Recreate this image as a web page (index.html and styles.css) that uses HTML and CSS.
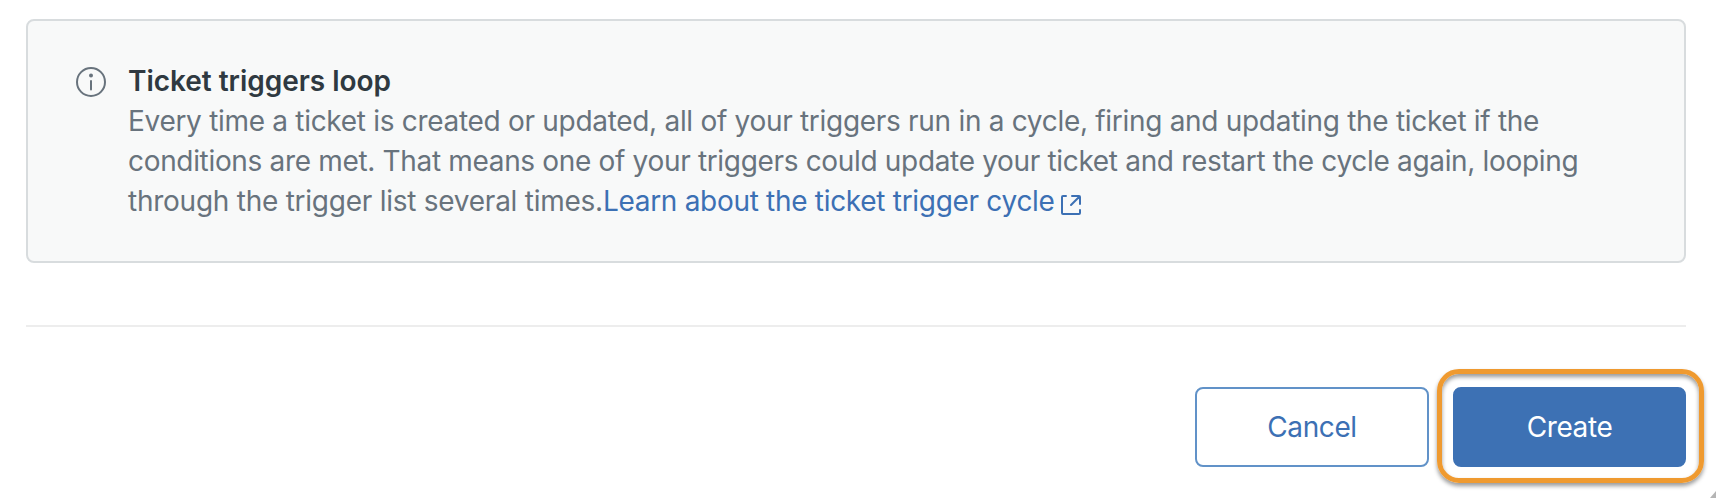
FILE: index.html
```html
<!DOCTYPE html>
<html lang="en">
<head>
    <meta charset="UTF-8">
    <meta name="viewport" content="width=device-width, initial-scale=1.0">
    <title>Create trigger</title>
    <link rel="stylesheet" href="styles.css">
</head>
<body>
    <div class="container">
        <div class="well">
            <svg class="info-icon" viewBox="0 0 16 16" aria-hidden="true">
                <circle cx="8" cy="8" r="7" fill="none" stroke="currentColor"/>
                <path stroke="currentColor" stroke-linecap="round" d="M8 7.5v4.3"/>
                <circle cx="8" cy="4.7" r="1" fill="currentColor"/>
            </svg>
            <div class="well-content">
                <h2 class="title">Ticket triggers loop</h2>
                <p class="text">
                    <span class="line">Every time a ticket is created or updated, all of your triggers run in a cycle, firing and updating the ticket if the</span>
                    <span class="line line-tight">conditions are met. That means one of your triggers could update your ticket and restart the cycle again, looping</span>
                    <span class="line"><span class="line-loose">through the trigger list several times.</span><a class="link" href="#">Learn about the ticket trigger cycle<svg class="link-icon" viewBox="0 0 12 12" aria-hidden="true"><path fill="none" stroke="currentColor" stroke-linecap="round" d="M10.5 8.5V10c0 .3-.2.5-.5.5H2c-.3 0-.5-.2-.5-.5V2c0-.3.2-.5.5-.5h1.5M6 6l4-4m-3.5-.5H10c.3 0 .5.2.5.5v3.5"/></svg></a></span>
                </p>
            </div>
        </div>

        <hr class="divider">

        <div class="btn-group">
            <button type="button" class="btn">Cancel</button>
            <div class="highlight">
                <button type="submit" class="btn btn-primary">Create</button>
            </div>
        </div>
    </div>
    <div class="corner"></div>
</body>
</html>
```

FILE: styles.css
```css
* {
    box-sizing: border-box;
}

body {
    margin: 0;
    height: 498px;
    position: relative;
    overflow: hidden;
    background: #fff;
    font-family: Inter, "Liberation Sans", sans-serif;
    font-size: 28px;
    line-height: 40px;
}

.container {
    padding: 19px 30px 0 26px;
}

.well {
    display: flex;
    gap: 20px;
    padding: 40px 48px;
    border: 2px solid #d8dcde;
    border-radius: 8px;
    background: #f8f9f9;
    color: #68737d;
}

.info-icon {
    flex: none;
    width: 32px;
    height: 32px;
    margin-top: 5px;
    margin-left: -1px;
    margin-right: 1px;
}

.title {
    margin: 0;
    font-size: 28px;
    font-weight: 600;
    line-height: 40px;
    letter-spacing: -0.03px;
    color: #2f3941;
}

.text {
    margin: 0;
    letter-spacing: -0.3px;
}

.line {
    display: block;
    white-space: nowrap;
}

.line-tight {
    letter-spacing: -0.33px;
}

.line-loose {
    letter-spacing: -0.25px;
}

.link {
    color: #3c70b4;
    text-decoration: none;
}

.link-icon {
    width: 24px;
    height: 24px;
    margin-left: 4px;
    vertical-align: -6px;
}

.divider {
    height: 2px;
    margin: 62px 0 0;
    border: none;
    background: #ededed;
}

.btn-group {
    display: flex;
    justify-content: flex-end;
    margin-top: 42px;
    margin-right: -18px;
}

.btn {
    width: 234px;
    height: 80px;
    margin: 18px 8px 0 0;
    padding: 0;
    border: 2px solid #6192c8;
    border-radius: 8px;
    background: #fff;
    color: #3c70b4;
    font: inherit;
    letter-spacing: -0.4px;
    cursor: pointer;
}

.btn-primary {
    display: block;
    width: 233px;
    margin: 0;
    border-color: #3d71b4;
    background: #3d71b4;
    color: #fff;
}

/* orange frame around the create button */
.highlight {
    padding: 13px 13px 11px 11px;
    border: 5px solid #ef9a30;
    border-radius: 22px;
    box-shadow: 0 3px 4px rgba(0, 0, 0, 0.4), inset 0 3px 4px rgba(0, 0, 0, 0.4);
}

.corner {
    position: absolute;
    right: 0;
    bottom: 0;
    width: 6px;
    height: 7px;
    background: #b5b5b5;
    clip-path: polygon(100% 0, 100% 100%, 0 100%);
}
```
